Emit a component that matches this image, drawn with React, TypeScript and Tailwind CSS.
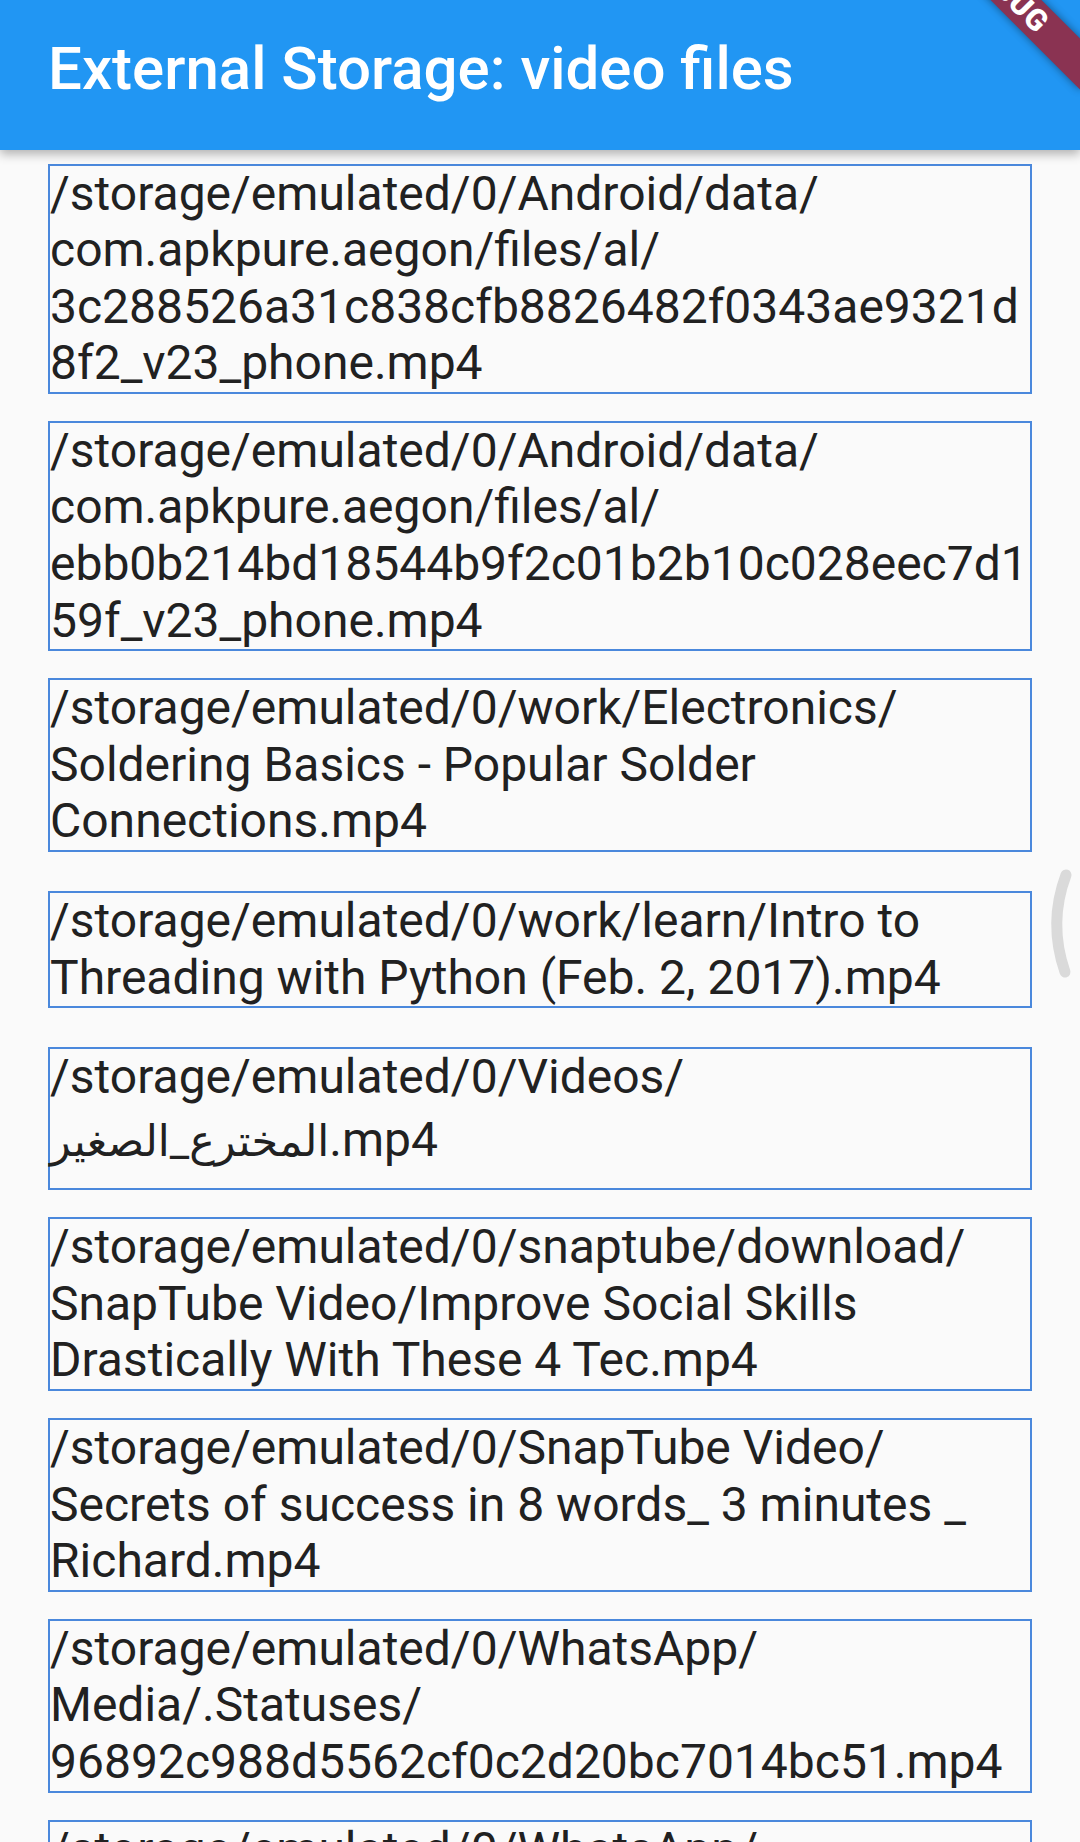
const files: string[][] = [
  [
    "/storage/emulated/0/Android/data/",
    "com.apkpure.aegon/files/al/",
    "3c288526a31c838cfb8826482f0343ae9321d",
    "8f2_v23_phone.mp4",
  ],
  [
    "/storage/emulated/0/Android/data/",
    "com.apkpure.aegon/files/al/",
    "ebb0b214bd18544b9f2c01b2b10c028eec7d1",
    "59f_v23_phone.mp4",
  ],
  [
    "/storage/emulated/0/work/Electronics/",
    "Soldering Basics - Popular Solder",
    "Connections.mp4",
  ],
  [
    "/storage/emulated/0/work/learn/Intro to",
    "Threading with Python (Feb. 2, 2017).mp4",
  ],
  ["/storage/emulated/0/Videos/", "المخترع_الصغير.mp4"],
  [
    "/storage/emulated/0/snaptube/download/",
    "SnapTube Video/Improve Social Skills",
    "Drastically With These 4 Tec.mp4",
  ],
  [
    "/storage/emulated/0/SnapTube Video/",
    "Secrets of success in 8 words_ 3 minutes _",
    "Richard.mp4",
  ],
  [
    "/storage/emulated/0/WhatsApp/",
    "Media/.Statuses/",
    "96892c988d5562cf0c2d20bc7014bc51.mp4",
  ],
  [
    "/storage/emulated/0/WhatsApp/",
    "Media/.Statuses/",
    "a1b2c3d4e5f60718293a4b5c6d7e8f90.mp4",
  ],
];

function Line({ text }: { text: string }) {
  const arabic = text.match(/^([\u0600-\u06ff_]+)(.*)$/);
  if (arabic) {
    // arabic file name, the fallback font runs taller than roboto
    return (
      <div dir="ltr" className="whitespace-nowrap pt-[6px] pb-[19px]">
        <span className="text-[43px]">{arabic[1]}</span>
        {arabic[2]}
      </div>
    );
  }
  return <div className="whitespace-nowrap">{text}</div>;
}

function FileItem({ lines }: { lines: string[] }) {
  return (
    <div className="flex min-h-[168px] flex-col justify-center px-[48px] py-[13.5px]">
      <div className="border-2 border-[#4a88dc] text-[48px] leading-[56.6px] text-[#212121]">
        {lines.map((line, i) => (
          <Line key={i} text={line} />
        ))}
      </div>
    </div>
  );
}

export default function App() {
  return (
    <div
      className="relative h-[1842px] w-[1080px] overflow-hidden bg-[#fafafa]"
      style={{ fontFamily: "Roboto, 'DejaVu Sans', sans-serif" }}
    >
      <div className="relative z-10 h-[150px] bg-[#2196f3] pl-[48px] pt-[39px] shadow-[0_4px_10px_rgba(0,0,0,0.3)]">
        <h1 className="text-[60px] font-medium leading-[60px] text-white">
          External Storage: video files
        </h1>
      </div>

      <div className="flex flex-col">
        {files.map((lines, i) => (
          <FileItem key={i} lines={lines} />
        ))}
      </div>

      {/* debug banner */}
      <div className="absolute left-[888px] top-[-26px] z-20 flex h-[36px] w-[240px] rotate-45 items-center justify-center bg-[#8a3352] shadow-[0_0_8px_rgba(0,0,0,0.45)]">
        <span className="text-[30px] font-black leading-none tracking-[1px] text-white">
          DEBUG
        </span>
      </div>

      {/* edge scroll indicator */}
      <svg
        className="absolute left-[1030px] top-[860px]"
        width="50"
        height="130"
        viewBox="0 0 50 130"
      >
        <path
          d="M36 15 Q18 63 35 112"
          fill="none"
          stroke="#dadada"
          strokeWidth="11"
          strokeLinecap="round"
        />
      </svg>
    </div>
  );
}
